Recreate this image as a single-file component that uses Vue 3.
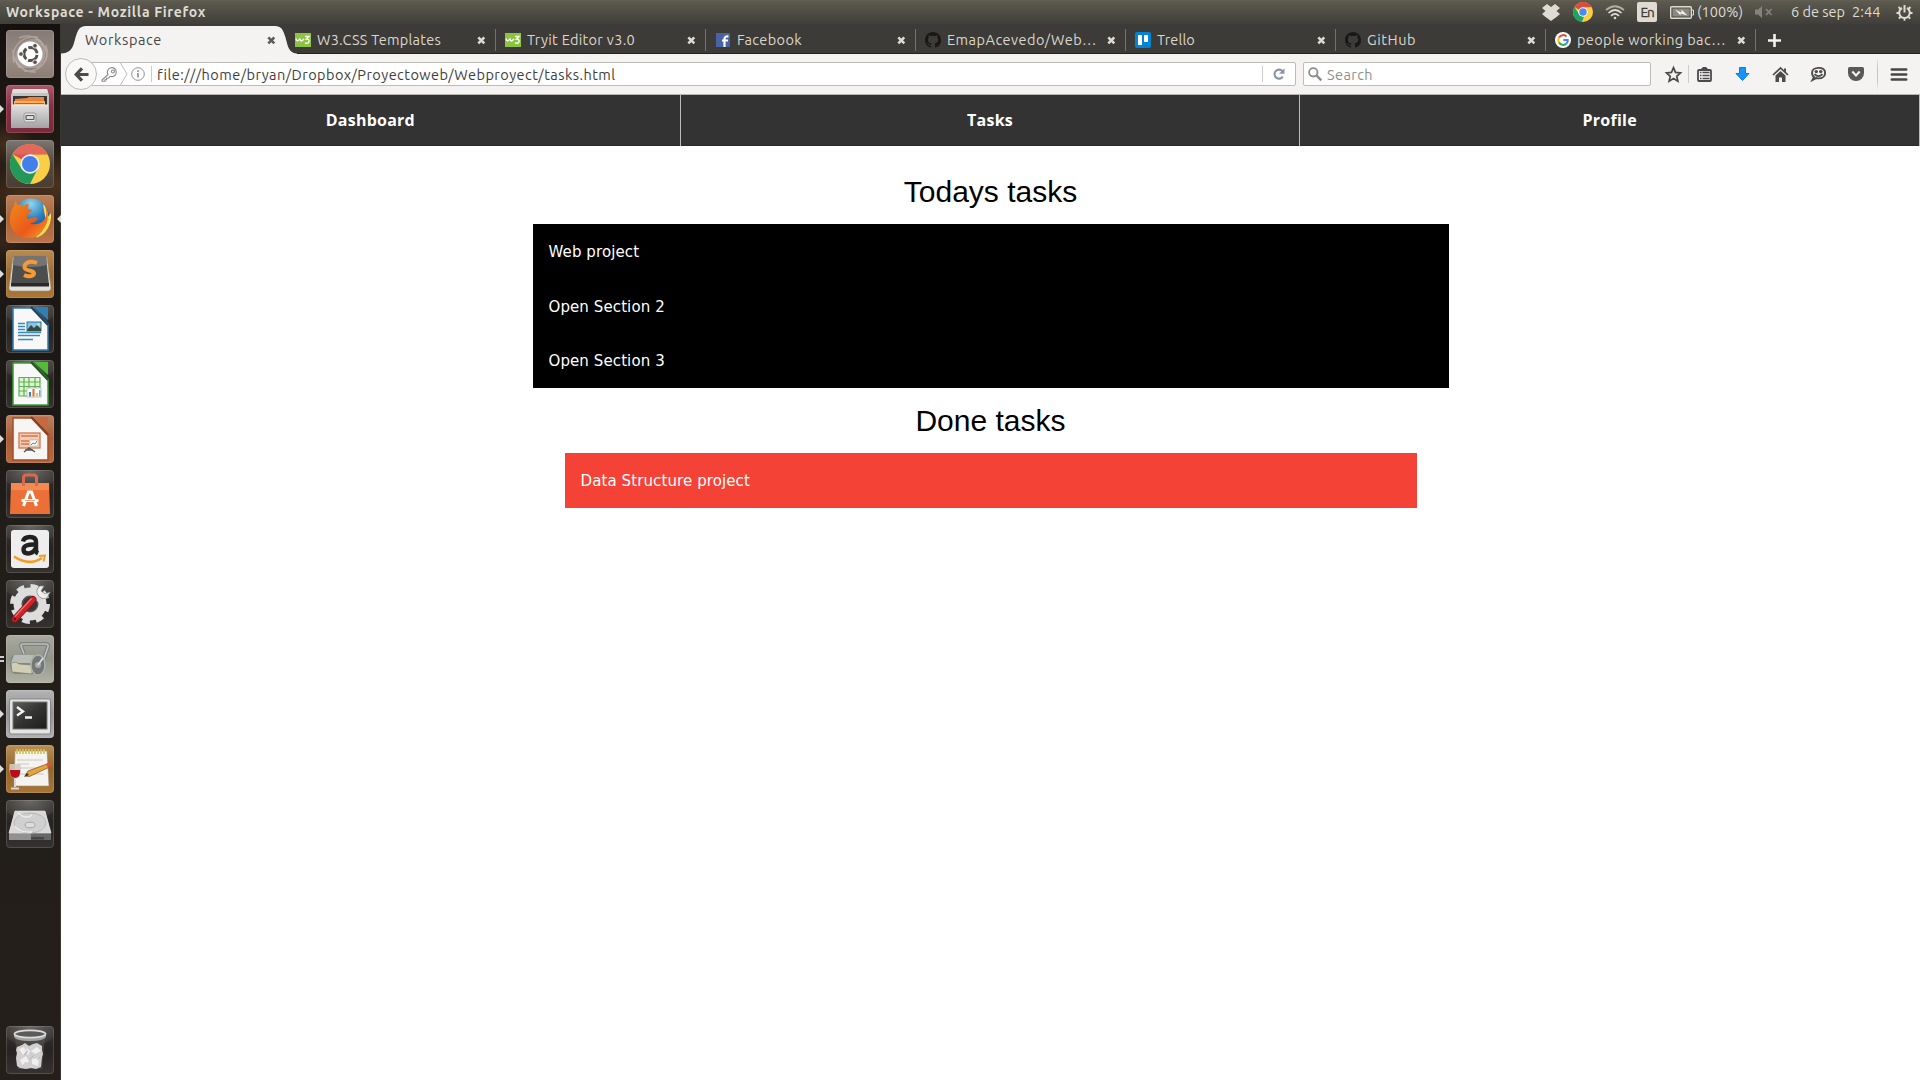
<script setup>
// Sets the letter spacing so a label takes the given width in pixels.
const vFit = {
  mounted(el, { value }) {
    const natural = el.getBoundingClientRect().width
    const count = [...el.textContent].length
    el.style.letterSpacing = (value - natural) / count + 'px'
  }
}

const tabs = [
  { title: 'W3.CSS Templates', icon: 'w3', width: 124 },
  { title: 'Tryit Editor v3.0', icon: 'w3', width: 108 },
  { title: 'Facebook', icon: 'facebook', width: 65 },
  { title: 'EmapAcevedo/Web…', icon: 'github', width: 150 },
  { title: 'Trello', icon: 'trello', width: 38 },
  { title: 'GitHub', icon: 'github', width: 49 },
  { title: 'people working bac…', icon: 'google', width: 149 }
]

const apps = [
  { name: 'dash' },
  { name: 'files', running: true },
  { name: 'chrome' },
  { name: 'firefox', running: true, focused: true },
  { name: 'sublime', running: true },
  { name: 'writer' },
  { name: 'calc' },
  { name: 'impress', running: true },
  { name: 'software' },
  { name: 'amazon' },
  { name: 'settings' },
  { name: 'roller', multiple: true },
  { name: 'terminal', running: true },
  { name: 'wine', running: true },
  { name: 'disk' },
  { name: 'trash' }
]

const sections = ['Dashboard', 'Tasks', 'Profile']
const todo = ['Web project', 'Open Section 2', 'Open Section 3']
const done = ['Data Structure project']
</script>

<template>
  <div class="desktop">
    <header class="panel">
      <b v-fit="200" class="fit">Workspace - Mozilla Firefox</b>
      <div class="tray">
        <svg class="t-dropbox" width="18" height="17" viewBox="0 0 18 17" fill="#dfdbd2"><path d="M5 0 9 3 13 0 18 4 14.500 7 18 10 14.500 13 9 17 3.500 13 0 10 3.500 7 0 4Z" /></svg>
        <svg class="t-chrome" width="20" height="20" viewBox="0 0 40 40">
          <circle cx="20" cy="20" r="20" fill="#ffcd40" /><path d="M20 20 2.700 10A20 20 0 0 1 37.300 10L20 11Z" fill="#dd4b3e" /><path d="M2.700 10 12 24 22 29 18 40A20 20 0 0 1 2.700 10Z" fill="#1da362" /><circle cx="20" cy="20" r="9.500" fill="#fff" /><circle cx="20" cy="20" r="7.500" fill="#4a8af4" />
        </svg>
        <svg class="t-wifi" width="20" height="15" viewBox="0 0 20 15" fill="none" stroke="#dfdbd2" stroke-width="1.700"><path d="M1 5Q10-2.500 19 5" opacity=".65" /><path d="M3.500 8Q10 2 16.500 8M6 10.800Q10 6.800 14 10.800" /><circle cx="10" cy="13" r="1.300" fill="#dfdbd2" stroke="none" /></svg>
        <span class="t-lang"><span v-fit="13" class="fit">En</span></span>
        <svg class="t-battery" width="24" height="13" viewBox="0 0 24 13"><rect x=".7" y=".7" width="20.600" height="11.600" rx="1" fill="none" stroke="#dfdbd2" stroke-width="1.400" /><rect x="2.500" y="2.500" width="17" height="8" fill="#8b8881" /><path d="M22 4h1.500v5H22" stroke="#dfdbd2" fill="none" /><path d="M5 3.500 11.500 6.500 11.500 3.500 17.500 9.500 10.500 7.500 10.500 9.500Z" fill="#f4f1ea" /></svg>
        <span v-fit="46" class="t-percent fit">(100%)</span>
        <svg class="t-mute" width="18" height="12" viewBox="0 0 18 12" fill="#85837d"><path d="M0 3.500h3L7 0v12L3 8.500H0Z" /><path d="m11 3 5.500 6m0-6L11 9" stroke="#85837d" stroke-width="1.700" /></svg>
        <span v-fit="54" class="t-date fit">6 de sep</span>
        <span v-fit="28.500" class="t-time fit">2:44</span>
        <svg class="t-power" width="17" height="17" viewBox="0 0 17 17" fill="none" stroke="#dfdbd2"><path d="M6 4A5.300 5.300 0 1 0 11 4" stroke-width="2" /><path d="M8.500 1v7.500" stroke-width="2" /><path d="M2.500 3 4.500 5M14.500 3 12.500 5M.5 9h3M13.500 9h3M2.800 14.700 4.500 13M14.200 14.700 12.500 13M8.500 14v2.700" stroke-width="1.800" /></svg>
      </div>
    </header>

    <div class="below">
      <aside class="launcher">
        <div v-for="app in apps" :key="app.name" class="slot" :class="'slot-' + app.name">
          <i v-if="app.running" class="mark" />
          <i v-if="app.multiple" class="mark-multi" />
          <i v-if="app.focused" class="mark-focus" />
          <div class="tile" :class="app.name">
            <svg width="48" height="48" viewBox="0 0 48 48">
              <defs>
                <linearGradient id="metal" x1="0" y1="0" x2="0" y2="1"><stop offset="0" stop-color="#e0e0e0" /><stop offset="1" stop-color="#a3a3a3" /></linearGradient>
                <linearGradient id="screen" x1="0" y1="0" x2="1" y2="1"><stop offset="0" stop-color="#5d5f5c" /><stop offset=".5" stop-color="#333432" /><stop offset="1" stop-color="#1d1e1c" /></linearGradient>
                <linearGradient id="flame" x1="0" y1="0" x2="1" y2="1"><stop offset="0" stop-color="#f08a1d" /><stop offset=".6" stop-color="#ea5a1a" /><stop offset="1" stop-color="#f9a02d" /></linearGradient>
                <radialGradient id="globe" cx=".5" cy=".15" r=".85"><stop offset="0" stop-color="#8fd6ee" /><stop offset=".5" stop-color="#2a7fbd" /><stop offset="1" stop-color="#173c7a" /></radialGradient>
              </defs>
              <g v-if="app.name === 'dash'">
                <path d="M8 33C4 17 16 5 32 7M40 15c5 16-7 28-22 26M13 8C27 2 41 12 41 27M7 20C7 34 18 43 30 42" fill="none" stroke="#d2c9c4" stroke-opacity=".45" stroke-width="1.500" />
                <path d="M12 38C4 22 15 6 33 9 42 15 41 30 32 38Z" fill="#d5ccc7" opacity=".3" />
                <circle cx="24" cy="24" r="12.500" fill="#fff" />
                <circle cx="24.500" cy="24" r="6.600" fill="none" stroke="#5a504b" stroke-width="3" stroke-dasharray="11.800 2" stroke-dashoffset="-1" />
                <g fill="#5a504b" stroke="#fff" stroke-width=".8"><circle cx="15" cy="24" r="2.300" /><circle cx="29" cy="15.800" r="2.300" /><circle cx="29" cy="32.200" r="2.300" /></g>
              </g>
              <g v-else-if="app.name === 'files'">
                <path d="M7 4h34l2 6v30H5V10Z" fill="#c4c4c3" /><path d="M7 4h34l1 4H6Z" fill="#dedede" /><path d="M7 11h34v11H7Z" fill="#373432" />
                <path d="M9 14l12-1 2-1h15v9H9Z" fill="#e98337" /><path d="M8 16h31v6H8Z" fill="#f6ae64" /><path d="M9 18.500h29" stroke="#c25e20" />
                <path d="M6 20h36l1 23H5Z" fill="url(#metal)" /><path d="M6 20h36" stroke="#eee" /><rect x="18" y="28" width="12" height="9" rx="2" fill="#e2e2e2" stroke="#989898" /><rect x="20" y="30.500" width="8" height="4" rx=".8" fill="#ddd" stroke="#555" stroke-width="1.200" />
              </g>
              <g v-else-if="app.name === 'chrome'">
                <circle cx="24" cy="24" r="20" fill="#f9cf45" />
                <path d="M24 24 6.500 14.200A20 20 0 0 1 41.500 14.500H24Z" fill="#db5449" /><path d="M6.500 14.200 15.500 28.500 31.500 29 24 44A20 20 0 0 1 6.500 14.200Z" fill="#22995b" />
                <path d="M6.500 14.200A20 20 0 0 1 41.500 14.500H24" fill="#f08b81" opacity=".35" />
                <circle cx="24" cy="24" r="9.700" fill="#eee" /><circle cx="24" cy="24" r="8" fill="#437fe8" />
              </g>
              <g v-else-if="app.name === 'firefox'">
                <circle cx="25" cy="21.500" r="18" fill="url(#globe)" />
                <path d="M37 9c5 5 5 10 5 13l3-4c1 13-6 22-15 25 6-6 11-12 9-22Z" fill="#fae255" />
                <path d="M8 11c0-2 1-4 2-5l1 4c3-1 6 0 7 1 2-2 4-2 5-2-1 2-1 3-1 5l4 1c0 2-3 3-5 4 0 2 0 4 1 5 4-1 6-3 10-1-2 4-5 5-8 5 3 2 10 2 14-3 3-4 3-9 1-13 4 5 3 9 3 12l1-1C39 35 32 43 24 43 10 44 2 33 4 21c1-5 2-8 4-10Z" fill="url(#flame)" />
                <path d="M41 16c3 12-3 21-12 26 9-2 15-10 15-19l-2 3q1-5-1-10Z" fill="#fbd94c" />
              </g>
              <g v-else-if="app.name === 'sublime'">
                <path d="M7 7h34l4 31q0 3-3 3H6q-3 0-3-3Z" fill="#e2e0dd" stroke="#9c8c77" stroke-width=".6" /><path d="M8 6h32l3 29H5Z" fill="#4c4d4d" /><path d="M8 6h32l1 9Q25 19 7 15Z" fill="#747474" /><path d="M5 33h38v3.500H5Z" fill="#292929" />
                <path d="M31 13q-8-3-11.500 1c-3 5 1 6 5.500 7 4 1 4 4 0 5q-3 1-7-1" fill="none" stroke="#f69a36" stroke-width="4" />
              </g>
              <g v-else-if="app.name === 'writer'">
                <path d="M7 3h20l15 16v26H7Z" fill="#f8f8f8" stroke="#2d7ab0" stroke-width="1.500" /><path d="M28 2h14v13Z" fill="#2f7fb5" /><path d="M25 2 42 20" stroke="#174767" stroke-width="2.200" />
                <path d="M12 18.500h7M12 21.500h7M12 24.500h7M12 27.500h23M12 30.500h22M12 34.500h15" stroke="#378abe" stroke-width="1.600" /><rect x="21" y="17" width="14" height="9" fill="#83c6ea" stroke="#2b73a5" /><path d="m21 25 4-5 3 3 3-3 4 4v2H21Z" fill="#354b3d" /><circle cx="32.500" cy="19.500" r="1.300" fill="#f4e65a" />
              </g>
              <g v-else-if="app.name === 'calc'">
                <path d="M7 3h20l15 16v26H7Z" fill="#f8f8f8" stroke="#379d32" stroke-width="1.500" /><path d="M28 2h14v13Z" fill="#50bc37" /><path d="M25 2 42 20" stroke="#215b1c" stroke-width="2.200" />
                <path d="M13 17.500h21v18.500H13Z" fill="#e0f4d7" /><path d="M13 17.500h21v18.500H13ZM13 22h21M13 26.500h21M13 31h21M18 17.500v18.500M23 17.500v18.500M29 17.500v18.500" fill="none" stroke="#5db24d" stroke-width="1.200" /><rect x="21" y="28" width="14" height="9" fill="#fff" stroke="#aaa" stroke-width=".7" /><path d="M24 32v4.500" stroke="#3984ba" stroke-width="2.200" /><path d="M27.500 29v7.500" stroke="#dc7945" stroke-width="2.200" /><path d="M31 33v3.500" stroke="#ecc03c" stroke-width="2.200" /><path d="M33.800 30v6.500" stroke="#60aed0" stroke-width="1.500" />
              </g>
              <g v-else-if="app.name === 'impress'">
                <path d="M7 3h20l15 16v26H7Z" fill="#f8f6f5" stroke="#a54d25" stroke-width="1.500" /><path d="M28 2h14v13Z" fill="#c76940" /><path d="M25 2 42 20" stroke="#8a3f20" stroke-width="2.200" />
                <rect x="13" y="18" width="21" height="15" fill="#f5cbb3" stroke="#cf7952" stroke-width="1.300" /><path d="M15 21h17M15 26h8M15 29h8" stroke="#d07a51" stroke-width="1.500" /><rect x="24" y="25" width="8" height="6" fill="#fff" stroke="#aaa" stroke-width=".6" /><path d="m25 30 2-2 2 1 2-3" fill="none" stroke="#369b55" /><path d="m18 37 5-4 6 4M19 35h8" fill="none" stroke="#565656" stroke-width="1.500" />
              </g>
              <g v-else-if="app.name === 'software'">
                <path d="M5 13h38l1 31H4Z" fill="#ed6f38" /><path d="M5 13h38v7H5Z" fill="#f48952" /><path d="M17.500 16V8q0-3 3-3h7q3 0 3 3v8" fill="none" stroke="#d9694d" stroke-width="3" /><path d="m17.500 36 5-14h3l5 14" fill="none" stroke="#fff" stroke-width="3" /><path d="M15.500 30.500h17" stroke="#fff" stroke-width="3" /><path d="M19 30.500h10" stroke="#f0a47f" stroke-width="1" />
              </g>
              <g v-else-if="app.name === 'amazon'">
                <rect x="5" y="5" width="38" height="38" rx="3" fill="#eeeeee" /><path d="M17 16.500q1-4.500 7-4.500 6 0 6 5v7.500q0 3 2 4M29.500 19.500q-12-.5-12 5 0 4 4.500 4 5 0 7.500-5" fill="none" stroke="#222" stroke-width="4.400" />
                <path d="M8 31.500q15 10 28 1.500" fill="none" stroke="#f79a20" stroke-width="2.600" /><path d="m33 31 6-.5-1.500 6" fill="none" stroke="#f79a20" stroke-width="1.800" />
              </g>
              <g v-else-if="app.name === 'settings'">
                <circle cx="24" cy="24" r="17.500" fill="none" stroke="#ddd" stroke-width="5" stroke-dasharray="7.500 6.240" /><circle cx="24" cy="24" r="12.500" fill="#555" stroke="#ddd" stroke-width="8" /><circle cx="24" cy="24" r="7" fill="#373737" />
                <path d="M30 20 36 14" stroke="#d8d8d8" stroke-width="7" /><path d="M34 6q-5 4-2 9 3 5 9 3l3-6-5 2-4-3 3-5Z" fill="#eee" stroke="#888" stroke-width=".7" /><path d="m9 39 18-19.500" stroke="#8d1014" stroke-width="7" stroke-linecap="round" /><path d="m9 39 18-19.500" stroke="#cf2328" stroke-width="5.400" stroke-linecap="round" /><path d="m9 36.500 16.500-18" stroke="#f2797b" stroke-width="1.200" /><circle cx="9" cy="39" r="1.300" fill="#5b1113" />
              </g>
              <g v-else-if="app.name === 'roller'">
                <path d="M18 19 15 11q0-2 2-2h22q4 0 3 3L36 29" fill="none" stroke="#7e8180" stroke-width="4" /><path d="M18 19 15 11q0-2 2-2h22q4 0 3 3L36 29" fill="none" stroke="#bcc0be" stroke-width="1.600" />
                <path d="M8 20 31 21V39H9Q4 37 4 29T8 20Z" fill="#858985" /><path d="M8 20h20l-3 8H5Z" fill="#b9bcb7" /><path d="M5 28 10 27l3 2 13 1v9L6 37Z" fill="#d0ceb5" stroke="#73765f" stroke-width=".6" /><ellipse cx="32" cy="30" rx="7" ry="10" fill="#737775" stroke="#abb0ad" stroke-width="1.500" /><circle cx="32" cy="30" r="3" fill="#a7abaa" /><path d="m32 30 5-7" stroke="#dedede" stroke-width="1.700" />
              </g>
              <g v-else-if="app.name === 'terminal'">
                <rect x="3.500" y="9" width="41" height="35" rx="2" fill="#e4e4e4" stroke="#878787" /><rect x="7" y="12" width="34" height="27" fill="url(#screen)" stroke="#777" /><path d="m11 17 6 4.500-6 4M19 27.500h7" fill="none" stroke="#f4f4f4" stroke-width="2.300" />
              </g>
              <g v-else-if="app.name === 'wine'">
                <path d="M9 6h32l2 35H8Z" fill="#f4f3ef" stroke="#9b907d" stroke-width=".6" /><path d="M11 4v5M14 4v5M17 4v5M20 4v5M23 4v5M26 4v5M29 4v5M32 4v5M35 4v5M38 4v5" stroke="#d7c24a" stroke-width="1.700" /><path d="M11 15h26M11 19h12M11 23h24M14 29h24" stroke="#c8c8c4" /><path d="m19 31 3-5 19-7 2.500 3-20 9.500Z" fill="#e5a33b" stroke="#875d20" stroke-width=".8" /><path d="m40 19 4-2 2 3-4 2.500Z" fill="#de5148" /><path d="m18 32 3-4 2 2Z" fill="#333" />
                <path d="M3.500 19h11q2 14-5.500 15Q2 32 3.500 19Z" fill="#d3c9c0" opacity=".9" /><path d="M4 25h10q1 7-5 8-5.500-1-5-8Z" fill="#b50f1b" /><path d="M9 33v9M5 43.500h8" stroke="#d8d8d8" stroke-width="2" />
              </g>
              <g v-else-if="app.name === 'disk'">
                <path d="M9 11h30l6 22v6H3v-6Z" fill="#c9c9c9" /><path d="M3 33h42v7H3Z" fill="#666" /><path d="M3 33h22v7H3Z" fill="#a9a9a9" opacity=".65" /><path d="M9 11h30l6 22H3Z" fill="#d8d8d8" stroke="#e6e6e6" stroke-width=".6" /><ellipse cx="24" cy="23" rx="16" ry="10" fill="#d0d0d0" stroke="#b8b8b8" /><path d="M12 13q8 7 14 2M9 26q4 7 17 6" fill="none" stroke="#f0f0f0" stroke-width="1.300" /><ellipse cx="24" cy="25" rx="5" ry="2.800" fill="#ddd" stroke="#a6a6a6" /><path d="M25 39.500h13v-2.500H25Z" fill="#444" />
              </g>
              <g v-else>
                <path d="M9 12h30l-3 31H12Z" fill="#55534f" opacity=".6" /><path d="m11 21 5-2 3-2 4 3 4-2 4-1 5 3v4l1 4-1 3-1 10-5 2-5-1-5 1-6-1-3-2-1-8 1-5-1-3Z" fill="#cfd0cf" /><path d="m13 23 5-2 2 4-3 4Zm12 2 6-4 4 4-6 3ZM14 34l6-4 3 5-6 5Zm12-1 7-1-1 8-6-2ZM20 21l4 4-2 5Z" fill="#efefef" /><path d="m18 29 4-4m1 9 5-5m3 5 3-3M17 40l3-4" stroke="#b3b5b3" stroke-width=".9" />
                <path d="M8 8v3q2 4 16 4t16-4V8Z" fill="#a2a2a2" /><ellipse cx="24" cy="8" rx="15.500" ry="3.700" fill="#5b5b5a" stroke="#dcdcdc" stroke-width="1.800" />
              </g>
            </svg>
          </div>
        </div>
      </aside>

      <main class="window">
        <div class="tabstrip">
          <div class="tab active">
            <svg class="tabshape" width="236" height="30" viewBox="0 0 236 30"><path d="M0 30V29.500C13 29 12.500 19 15 12 17 5.500 19 2 25 2H214C220 2 222 5.500 224 12 226.500 19 226.500 29 236 29.500V30Z" fill="#f4f3f1" /></svg>
            <span v-fit="77" class="label fit">Workspace</span>
            <svg class="x" width="9" height="9" viewBox="0 0 9 9"><path d="m1.300 1.300 6 6m0-6-6 6" /></svg>
          </div>
          <div v-for="(tab, i) in tabs" :key="i" class="tab">
            <svg width="16" height="16" viewBox="0 0 16 16">
              <template v-if="tab.icon === 'w3'"><path d="M0 1h16v14H0Z" fill="#8bc53f" /><path d="M1 6.500q.5 3 2.300 2L5 7q1 3 2.300 1.500L9 7M10 4.500h4L11.500 7q3 0 2.500 2.500t-4 1.500" fill="none" stroke="#fff" stroke-width="1.400" /></template>
              <template v-else-if="tab.icon === 'facebook'"><path d="M1 1h14v14H1Z" fill="#4862a3" /><path d="M9.500 15V7q0-3 4-2.500M7 8.500h6" fill="none" stroke="#fff" stroke-width="2.200" /></template>
              <path v-else-if="tab.icon === 'github'" fill="#191717" d="M8 0C3.580 0 0 3.580 0 8c0 3.540 2.290 6.530 5.470 7.590.4.070.55-.17.55-.38 0-.19-.01-.82-.01-1.490-2.010.37-2.530-.49-2.690-.94-.09-.23-.48-.94-.82-1.130-.28-.15-.68-.52-.01-.53.63-.01 1.080.58 1.230.82.72 1.210 1.870.87 2.330.66.07-.52.28-.87.51-1.070-1.780-.2-3.640-.89-3.640-3.950 0-.87.31-1.590.82-2.150-.08-.2-.36-1.020.08-2.120 0 0 .67-.21 2.200.82a7.600 7.600 0 0 1 4 0c1.530-1.040 2.200-.82 2.200-.82.44 1.100.16 1.920.08 2.120.51.56.82 1.270.82 2.150 0 3.070-1.870 3.750-3.650 3.950.29.25.54.73.54 1.480 0 1.070-.01 1.930-.01 2.200 0 .21.15.46.55.38A8.010 8.010 0 0 0 16 8c0-4.420-3.580-8-8-8Z" />
              <template v-else-if="tab.icon === 'trello'"><rect width="16" height="16" rx="2" fill="#0283d3" /><rect x="3" y="3" width="4" height="10" rx=".5" fill="#fff" /><rect x="9" y="3" width="4" height="7" rx=".5" fill="#fff" /></template>
              <template v-else><circle cx="8" cy="8" r="8" fill="#fff" /><g fill="none" stroke-width="2"><path d="M11.500 4.500A4.800 4.800 0 0 0 4 5.500" stroke="#ea4335" /><path d="M4 5.500a4.800 4.800 0 0 0 0 5" stroke="#fbbc05" /><path d="M4 10.500a4.800 4.800 0 0 0 7.500 1" stroke="#34a853" /><path d="M11.500 11.500Q13 10 12.800 8H8.300" stroke="#4285f4" /></g></template>
            </svg>
            <span v-fit="tab.width" class="label fit">{{ tab.title }}</span>
            <svg class="x" width="9" height="9" viewBox="0 0 9 9"><path d="m1.300 1.300 6 6m0-6-6 6" /></svg>
            <i class="divider" />
          </div>
          <svg class="plus" width="13" height="13" viewBox="0 0 13 13"><path d="M6.500 0v13M0 6.500h13" stroke="#f4f3f1" stroke-width="2.600" /></svg>
        </div>

        <div class="toolbar">
          <div class="back"><svg width="15" height="15" viewBox="0 0 15 15" fill="none" stroke="#4b4b4b" stroke-width="3.200"><path d="M8 1.300 2.200 7.500 8 13.700M2.500 7.500H14.500" /></svg></div>
          <div class="urlbar">
            <svg class="key" width="17" height="15" viewBox="0 0 17 15" fill="none" stroke="#8a8a8a" stroke-width="1.100"><path d="M7 7.500 1 13v1.300h3v-1.500h1.600v-1.500h1.500l2-2A4.500 4.500 0 1 0 7 7.500Z" /><circle cx="12" cy="4.500" r="1.500" /></svg>
            <svg class="chevron" width="8" height="22" viewBox="0 0 8 22" fill="none" stroke="#bbb"><path d="m.5 0 6.500 11-6.500 11" /></svg>
            <svg class="info" width="14" height="14" viewBox="0 0 14 14"><circle cx="7" cy="7" r="6.300" fill="none" stroke="#909090" /><path d="M7 6v4.500M7 3.300v1.600" stroke="#8a8a8a" stroke-width="1.600" /></svg>
            <i class="rule" />
            <span v-fit="458" class="url fit">file:///home/bryan/Dropbox/Proyectoweb/Webproyect/tasks.html</span>
            <div class="reload"><svg width="12" height="12" viewBox="0 0 12 12"><path d="M9.500 3.300A4.500 4.500 0 1 0 9.800 8.600" fill="none" stroke="#8696a8" stroke-width="2.100" /><path d="M11.500.3V5.700H6Z" fill="#8696a8" /></svg></div>
          </div>
          <div class="search">
            <svg width="14" height="14" viewBox="0 0 14 14" fill="none" stroke="#8c8c8c"><circle cx="5.300" cy="5.300" r="4.200" stroke-width="1.800" /><path d="m8.500 8.500 4.800 4.800" stroke-width="2.400" /></svg>
            <span v-fit="46" class="fit">Search</span>
          </div>
          <div class="tools">
            <svg class="star" width="17" height="17" viewBox="0 0 17 17"><path d="m8.500 1.700 2 4.700 5 .5-3.800 3.400 1.200 5-4.400-2.700-4.400 2.700 1.200-5L1.500 6.900l5-.5Z" fill="none" stroke="#4b4b4b" stroke-width="1.700" /></svg>
            <i class="rule" />
            <svg class="list" width="15" height="15" viewBox="0 0 15 15"><path d="M2 3h11q1 0 1 1v9q0 1-1 1H2q-1 0-1-1V4q0-1 1-1Z" fill="none" stroke="#4b4b4b" stroke-width="1.800" /><path d="M4.500 3V1.500L6 0h3l1.500 1.500V3Z" fill="#4b4b4b" /><path d="M3 5.500h1.500M3 8.500h1.500M3 11.500h1.500M5.500 5.500h7M5.500 8.500h7M5.500 11.500h7" stroke="#4b4b4b" stroke-width="1.500" /></svg>
            <svg class="down" width="15" height="14" viewBox="0 0 15 14"><path d="M4.500.5h6V6.500H14L7.500 13.500 1 6.500H4.500Z" fill="#1793fb" stroke="#087bea" /></svg>
            <svg class="home" width="15" height="15" viewBox="0 0 15 15"><path d="M0 8 7.500 1 15 8" fill="none" stroke="#4b4b4b" stroke-width="1.700" /><path d="m2.500 8.500 5-4.500 5 4.500V15H9v-4.500H6V15H2.500ZM11 1.500h2v4l-2-2Z" fill="#4b4b4b" /></svg>
            <svg class="chat" width="15" height="14" viewBox="0 0 15 14"><path d="M7.500.9c4 0 6.600 2 6.600 5s-2.600 5.500-6.600 5.500L5 11.100 1.500 13 3 10Q1 8.500 1 6C1 3 3.500.9 7.500.9Z" fill="none" stroke="#4b4b4b" stroke-width="1.900" /><circle cx="5.300" cy="4.600" r="1.700" fill="#4b4b4b" /><circle cx="9.700" cy="4.600" r="1.700" fill="#4b4b4b" /><path d="M3.500 7.200q4 4 8 0" fill="none" stroke="#4b4b4b" stroke-width="1.700" /></svg>
            <svg class="pocket" width="16" height="14" viewBox="0 0 16 14"><path d="M1.500 0h13Q16 0 16 1.500V6a8 8 0 0 1-16 0V1.500Q0 0 1.500 0Z" fill="#595959" /><path d="m4.300 4.500 3.700 4 3.700-4" fill="none" stroke="#f4f3f1" stroke-width="2" /></svg>
            <i class="rule tall" />
            <svg class="menu" width="16" height="13" viewBox="0 0 16 13"><path d="M.8 1.500h14.400M.8 6.500h14.400M.8 11.500h14.400" stroke="#474747" stroke-width="2.600" stroke-linecap="round" /></svg>
          </div>
        </div>

        <nav class="sitenav">
          <a v-for="name in sections" :key="name">{{ name }}</a>
        </nav>
        <article class="page">
          <h2>Todays tasks</h2>
          <ul class="todo"><li v-for="item in todo" :key="item">{{ item }}</li></ul>
          <h2>Done tasks</h2>
          <ul class="done"><li v-for="item in done" :key="item">{{ item }}</li></ul>
        </article>
      </main>
    </div>
  </div>
</template>

<style>
body { margin: 0; overflow: hidden; }
</style>

<style scoped>
.desktop { width: 1920px; height: 1080px; display: flex; flex-direction: column; background: #fff; font: 14.5px "Ubuntu", "Open Sans", sans-serif; overflow: hidden; }
.desktop * { box-sizing: border-box; }
svg { display: block; flex: none; overflow: visible; }
i { display: block; flex: none; }
.fit { display: inline-block; white-space: pre; flex: none; }

.panel { height: 24px; flex: none; display: flex; align-items: center; padding-left: 6px; color: #dfdbd2; background: linear-gradient(#626052 0, #5b594f 2px, #3f3e39 100%); line-height: 24px; }
.panel b { font-size: 14px; }
.tray { display: flex; align-items: center; margin-left: auto; padding-right: 7.500px; }
.t-chrome { margin-left: 13px; }
.t-wifi { margin-left: 12px; }
.t-lang { width: 20px; height: 20px; margin-left: 12px; border-radius: 2px; background: #dfdbd2; color: #3c3a36; line-height: 20px; padding-left: 3.500px; font-size: 13.500px; -webkit-text-stroke: .3px; }
.t-battery { margin-left: 13px; }
.t-percent { margin-left: 3px; }
.t-mute { margin-left: 12px; }
.t-date { margin-left: 18px; }
.t-time { margin-left: 7px; }
.t-power { margin-left: 15px; }

.below { display: flex; flex: 1; min-height: 0; }
.launcher { width: 61px; flex: none; display: flex; flex-direction: column; gap: 7px; padding: 6px 0; border-right: 1px solid #3a3632; background:
  radial-gradient(ellipse 30px 22px at 5px 120px, #5b3b2099, transparent),
  radial-gradient(ellipse 38px 34px at 58px 160px, #6d442377, transparent),
  radial-gradient(ellipse 30px 28px at 20px 170px, #57371f88, transparent),
  radial-gradient(ellipse 35px 22px at 4px 218px, #3e2b1caa, transparent),
  linear-gradient(#14110f 0, #211a14 120px, #302216 170px, #1d1815 230px, #1c1815 400px, #211d19 500px, #241f1b 100%); }
.slot { position: relative; height: 48px; flex: none; padding-left: 6px; }
.slot-trash { margin-top: auto; }
.tile { width: 48px; height: 48px; border-radius: 4px; box-shadow: inset 0 0 0 1px #ffffff24; background: radial-gradient(ellipse 36px 24px at 50% 0, #6d6b68, #3b3835 80%, transparent 82%), linear-gradient(#3a3734, #262320 50%, #35322f); }
.tile.dash { background: linear-gradient(#857a75, #9b8d85 60%, #8b7d74); }
.tile.files { background: linear-gradient(#a95867, #873044 45%, #792a3a); }
.tile.chrome { background: linear-gradient(#7b7773, #55483c 50%, #4a3e32); }
.tile.firefox { background: linear-gradient(#bc8159, #a8623a 50%, #bb754a); }
.tile.sublime { background: linear-gradient(#b98b51, #9b6c32 50%, #a97638); }
.tile.impress { background: linear-gradient(#bd805f, #a85d38 50%, #b7693e); }
.tile.roller { background: linear-gradient(#a9aa9f, #93958b 50%, #b1b2a5); }
.tile.terminal { background: linear-gradient(#b4b4b4, #929292 50%, #b1b1b1); }
.tile.wine { background: linear-gradient(#b99057, #946526 50%, #a87536); }
.mark { position: absolute; left: 0; top: 20px; border: 4px solid transparent; border-left-color: #ddd; border-right: 0; }
.mark-focus { position: absolute; right: -1px; top: 20px; border: 4px solid transparent; border-right-color: #ddd; border-left: 0; }
.mark-multi { position: absolute; left: 0; top: 21px; width: 4px; height: 6px; border: solid #ccc; border-width: 2px 0; }

.window { flex: 1; min-width: 0; display: flex; flex-direction: column; background: #fff; }
.tabstrip { height: 30px; flex: none; display: flex; align-items: center; background: #3c3b37; box-shadow: inset 0 -1px #24231f; color: #dad6cd; }
.tab { width: 210px; height: 30px; flex: none; display: flex; align-items: center; position: relative; padding: 2px 9.500px 0 10px; }
.tab .label { margin-left: 6px; line-height: 26px; }
.tab .x { margin-left: auto; }
.x path { stroke: #dedbd4; stroke-width: 2.600; }
.divider { width: 1px; height: 22px; background: #74726c; position: absolute; right: -1px; top: 5px; }
.active { width: 224px; padding: 2px 9.500px 0 18px; color: #474747; }
.active .x path { stroke: #5b5b5b; }
.active > * { position: relative; }
.active .tabshape { position: absolute; left: 0; top: 0; }
.plus { margin: 2px 0 0 12.500px; }

.toolbar { height: 41px; flex: none; display: flex; align-items: center; padding-left: 4px; background: #f4f3f1; border-bottom: 1px solid #b8b7b2; }
.back { position: relative; width: 32px; height: 32px; flex: none; border: 1px solid #bdbcb8; border-radius: 50%; background: #f9f8f7; display: grid; place-items: center; z-index: 1; }
.urlbar { height: 24px; width: 1206px; margin-left: -7px; display: flex; align-items: center; background: #fff; border: 1px solid #bdbcb8; border-radius: 2px; padding-left: 10px; color: #3e3e3e; }
.chevron { margin-left: 2px; }
.info { margin-left: 3px; }
.urlbar .rule { margin-left: 6px; }
.rule { width: 1px; height: 16px; background: #ccc; }
.url { margin-left: 5px; line-height: 22px; padding-top: 1px; }
.reload { margin-left: auto; width: 33px; height: 16px; border-left: 1px solid #ccc; padding: 2px 0 0 9.500px; }
.search { width: 348px; height: 24px; margin-left: 7px; flex: none; display: flex; align-items: center; gap: 5px; padding-left: 4px; border: 1px solid #bdbcb8; border-radius: 2px; background: #fff; color: #8f8f8f; }
.search .fit { line-height: 22px; padding-top: 1px; }
.tools { display: flex; align-items: center; margin-left: 13.500px; height: 40px; }
.tools .rule { margin-left: 6px; height: 18px; }
.list { margin-left: 8px; }
.down { margin-left: 23px; }
.home { margin-left: 23px; }
.chat { margin-left: 23px; }
.pocket { margin-left: 22px; }
.tools .rule.tall { margin-left: 13px; height: 34px; background: linear-gradient(transparent, #c6c5c1 30%, #c6c5c1 70%, transparent); }
.menu { margin-left: 13.500px; }

.sitenav { display: flex; height: 51px; flex: none; background: #333; box-shadow: inset 0 -1px #292929; }
.sitenav a { flex: 1; border-right: 1px solid #bbb; text-align: center; color: #fff; font: bold 16px/51px "Open Sans", sans-serif; letter-spacing: .25px; }
.page { display: flex; flex-direction: column; align-items: center; padding-top: 13px; font: 15px/22.500px "DejaVu Sans", sans-serif; color: #fff; }
h2 { margin: 10px 0; font: 400 30px/45px "Liberation Sans", Arial, sans-serif; color: #000; }
ul { margin: 0; padding: 0; list-style: none; }
li { padding: 17px 16px 15px; letter-spacing: .1px; }
.todo { width: 916px; background: #000; }
.done { width: 852px; background: #f44336; }
.done li { padding-bottom: 15.500px; }
</style>
